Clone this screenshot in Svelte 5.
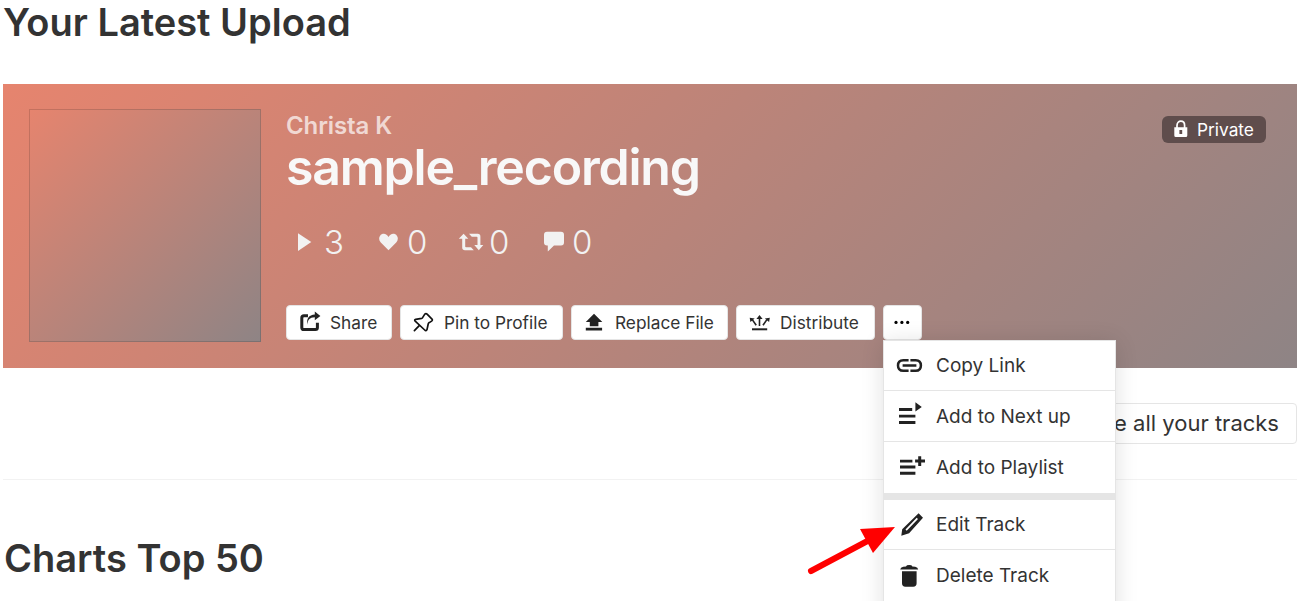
<script>
  const stats = [
    { icon: 'play', value: 3, width: 84 },
    { icon: 'heart', value: 0, width: 83 },
    { icon: 'repost', value: 0, width: 83 },
    { icon: 'comment', value: 0, width: 60 },
  ];
  const actions = [
    { icon: 'share', label: 'Share', width: 106 },
    { icon: 'pin', label: 'Pin to Profile', width: 163 },
    { icon: 'replace', label: 'Replace File', width: 157 },
    { icon: 'distribute', label: 'Distribute', width: 139 },
  ];
  const menu = [
    { icon: 'link', label: 'Copy Link' },
    { icon: 'next', label: 'Add to Next up' },
    { icon: 'playlist', label: 'Add to Playlist' },
    { icon: 'edit', label: 'Edit Track', group: true },
    { icon: 'trash', label: 'Delete Track' },
  ];
</script>

{#snippet glyph(name)}
  <svg class="glyph" width="28" height="28" viewBox="0 0 28 28" fill="currentColor" aria-hidden="true">
    {#if name === 'play'}
      <path d="M8 5.2 21.3 14 8 23z" />
    {:else if name === 'heart'}
      <path d="M14.5 22.2 6.8 14.4C4.7 12.1 4.7 9.2 6.3 7.4c1.6-1.9 4.4-2 6.2-.6.9.6 1.5 1.4 2 2.2.5-.9 1.1-1.6 2-2.2 1.8-1.4 4.6-1.3 6.2.6 1.6 1.8 1.6 4.7-.5 7z" />
    {:else if name === 'repost'}
      <path d="M6.6 5.8 11.3 10.8H8.2V18.4Q8.2 19.2 9 19.2H14L16.8 22.2H8Q5.2 22.2 5.2 19.6V10.8H1.8zM12 5.8H20.8Q23.4 5.8 23.4 8.4V17H26.3L21.8 22.2 17.3 17H20.5V9.6Q20.5 8.8 19.7 8.8H14.8z" />
    {:else if name === 'comment'}
      <path d="M7 3.8H21Q24 3.8 24 6.8V14.6Q24 17.6 21 17.6H14L7.8 23.5V17.6H7Q4 17.6 4 14.6V6.8Q4 3.8 7 3.8z" />
    {:else if name === 'share'}
      <path d="M12 6.8H8Q5.8 6.8 5.8 9V18.4Q5.8 20.5 8 20.5H19.4Q21.4 20.5 21.4 18.5V13.8" fill="none" stroke="currentColor" stroke-width="3" />
      <path d="M11.6 15.8C11.5 10.9 13.6 8.5 18.8 8.3V11.2L24.4 6.9 18.8 2.6V5.6C13 5.9 10 10 11.6 15.8z" />
    {:else if name === 'pin'}
      <path d="M14.8 5.1Q16 4.1 17.1 5.2L22 10.1Q22.9 11.2 21.6 12.1L19.3 13.6Q18.5 14 18.2 15L17 20.6Q16 22.4 14.7 21L5.2 12.1Q4 10.7 5.7 10.3L11.6 9.4Q12.6 9.2 12.9 8.1zM9 16.8 4.4 21.6" fill="none" stroke="#111" stroke-width="1.7" stroke-linecap="round" stroke-linejoin="round" />
    {:else if name === 'replace'}
      <path d="M13 4.8 21.3 12.9H17.4V17.2H8.8V12.9H4.8zM4.8 18.8H21.1V21.5H4.8z" />
    {:else if name === 'distribute'}
      <path d="M6 19.3H21.2V21.3H6z" />
      <path d="M13.5 17V8.5M10.2 16.2 6.3 10.6M17 16.2 20.9 10.6" fill="none" stroke="currentColor" stroke-width="1.6" />
      <path d="M13.5 6 16.6 9.9H10.4zM3.7 8.7 8.7 9.6 4.4 13.1zM23.8 8.7 18.8 9.6 23.1 13.1z" />
    {:else if name === 'link'}
      <path d="M12.6 8.2H7.3Q2 8.2 2 13.5T7.3 18.8H12.6M14.4 8.2H19.7Q24.9 8.2 24.9 13.5T19.7 18.8H14.4M6.6 13.5H20.4" fill="none" stroke="currentColor" stroke-width="2.5" />
    {:else if name === 'next'}
      <path d="M3 6H16.2V9H3zM3 12.7H19.4V15.6H3zM3 19H19.4V22H3zM19.4 .2 25.8 4.9 19.4 9.5z" />
    {:else if name === 'playlist'}
      <path d="M4 6.8H16.4V9.4H4zM4 12.5H19.4V15.6H4zM4 18.8H19.4V21.8H4zM22.2 3.2H25.2V6.6H29V9.5H25.2V12.9H22.2V9.5H19.1V6.6H22.2z" />
    {:else if name === 'edit'}
      <path d="M22.6 2.3 27 6.8 13.1 22.2 5.3 24.8 6.2 18.2zM20.7 6.7 9.5 18.6 10.7 19.8 22 7.9z" fill-rule="evenodd" />
    {:else if name === 'trash'}
      <path d="M4.2 8.6Q4.5 6.3 7.2 5.8L10 5.4Q10.4 4 13.2 4T16.4 5.4L19.2 5.8Q21.9 6.3 22.2 8.6zM6 10.2H20.6V22.3Q20.6 25.7 17.2 25.7H9.4Q6 25.7 6 22.3z" />
    {/if}
  </svg>
{/snippet}

<main class="page">
  <h2>Your Latest Upload</h2>

  <section class="hero">
    <div class="artwork"></div>
    <div class="details">
      <div class="artist">Christa K</div>
      <h1>sample_recording</h1>
      <div class="stats">
        {#each stats as s}
          <div class="stat {s.icon}" style="width: {s.width}px">
            {@render glyph(s.icon)}<span>{s.value}</span>
          </div>
        {/each}
      </div>
      <div class="actions">
        {#each actions as a}
          <button class={a.icon} style="width: {a.width}px">
            {@render glyph(a.icon)}<span>{a.label}</span>
          </button>
        {/each}
        <div class="more">
          <button class="dots" aria-label="More">
            <svg width="17" height="5" viewBox="0 0 17 5"><circle cx="2" cy="2.4" r="1.6" /><circle cx="7.9" cy="2.4" r="1.6" /><circle cx="13.7" cy="2.4" r="1.6" /></svg>
          </button>
          <div class="menu">
            {#each menu as m}
              <div class="item {m.icon}" class:group={m.group}>
                {@render glyph(m.icon)}<span>{m.label}</span>
              </div>
            {/each}
          </div>
        </div>
      </div>
    </div>
    <div class="private">
      <svg width="14" height="18" viewBox="0 0 14 18">
        <path d="M3 8V5.4C3 -.2 10.6 -.2 10.6 5.4V8" fill="none" stroke="#fff" stroke-width="1.7" />
        <path d="M.3 7.3H13.3V15.5Q13.3 17 11.8 17H1.8Q.3 17 .3 15.5zM5.4 10V14H8.2V10z" fill="#fff" fill-rule="evenodd" />
      </svg>
      <span>Private</span>
    </div>
  </section>

  <div class="all"><button>See all your tracks</button></div>
  <h2 class="charts">Charts Top 50</h2>

  <svg class="arrow" width="100" height="60" viewBox="0 0 100 60">
    <path d="M11 46 75 12" stroke="#f00" stroke-width="6" stroke-linecap="round" />
    <path d="M60 4 95 2 73 28z" fill="#f00" />
  </svg>
</main>

<style>
  :global(body) {
    margin: 0;
    background: #fff;
    overflow: hidden;
  }
  .page {
    position: relative;
    box-sizing: border-box;
    height: 601px;
    overflow: hidden;
    padding: 0 3px;
    font-family: Inter, sans-serif;
    color: #333;
  }
  h1, h2 {
    margin: 0;
    font-weight: 600;
    white-space: nowrap;
  }
  h2 {
    height: 84px;
    box-sizing: border-box;
    font-size: 38px;
    line-height: 44px;
  }
  .glyph {
    flex: none;
    overflow: visible;
  }
  .hero {
    display: flex;
    box-sizing: border-box;
    height: 284px;
    padding: 25px 31px 0 26px;
    background: linear-gradient(135deg, #e6846e 0%, #8e8485 100%);
  }
  .artwork {
    flex: none;
    box-sizing: border-box;
    width: 232px;
    height: 233px;
    border: 1px solid rgba(0, 0, 0, 0.14);
    background: linear-gradient(135deg, #e6846e 0%, #8e8485 100%) border-box;
  }
  .details {
    flex: 1;
    margin-left: 25px;
  }
  .artist {
    height: 33px;
    font-size: 24px;
    line-height: 33px;
    font-weight: 600;
    letter-spacing: -0.1px;
    color: rgba(255, 255, 255, 0.7);
  }
  h1 {
    height: 79px;
    font-size: 50px;
    line-height: 50px;
    color: #f8f8f8;
    letter-spacing: -1.2px;
  }
  .stats {
    display: flex;
    height: 42px;
    padding-left: 4px;
    color: #f2f2f2;
  }
  .stat {
    display: flex;
    align-items: center;
    height: 42px;
    gap: 6px;
    font-size: 33px;
    font-weight: 340;
  }
  .stat.heart { gap: 5px; }
  .stat.repost { gap: 4px; }
  .stat.comment { gap: 4px; }
  .actions {
    display: flex;
    gap: 8px;
    margin-top: 42px;
  }
  button {
    display: flex;
    align-items: center;
    box-sizing: border-box;
    height: 35px;
    padding: 0 0 0 9px;
    border: 1px solid #e5e5e5;
    border-radius: 4px;
    background: #fff;
    color: #333;
    font: 400 17.3px Inter, sans-serif;
    white-space: nowrap;
  }
  button .glyph {
    color: #222;
    margin-right: 6px;
  }
  .more {
    position: relative;
  }
  .dots {
    justify-content: center;
    width: 39px;
    padding: 0;
  }
  .menu {
    position: absolute;
    z-index: 2;
    top: 35px;
    left: 0;
    box-sizing: border-box;
    width: 233px;
    height: 300px;
    border: 1px solid #e5e5e5;
    background: #fff;
    box-shadow: 0 2px 22px rgba(0, 0, 0, 0.12);
  }
  .item {
    display: flex;
    align-items: center;
    box-sizing: border-box;
    height: 51px;
    padding: 0 0 0 12px;
    border-bottom: 1px solid #e5e5e5;
    font-size: 19px;
  }
  .item.link { height: 50px; }
  .item.group {
    height: 57px;
    border-top: 7px solid #e5e5e5;
  }
  .item.playlist,
  .item.trash { border-bottom-color: transparent; }
  .item .glyph {
    color: #222;
    margin-right: 12px;
  }
  .private {
    display: flex;
    align-items: center;
    box-sizing: border-box;
    width: 104px;
    height: 27px;
    margin-top: 7px;
    padding-left: 12px;
    border-radius: 6px;
    background: #5f4d4c;
    color: #fff;
    font-size: 17.3px;
  }
  .private svg {
    margin: -2px 9px 0 0;
  }
  .all {
    display: flex;
    justify-content: flex-end;
    box-sizing: border-box;
    height: 112px;
    padding-top: 35px;
    border-bottom: 1px solid #f2f2f2;
  }
  .all button {
    height: 41px;
    padding: 0 17px 2px;
    font-size: 22px;
  }
  .charts {
    margin-top: 56px;
    padding-left: 1px;
  }
  .arrow {
    position: absolute;
    z-index: 3;
    left: 800px;
    top: 525px;
  }
</style>
